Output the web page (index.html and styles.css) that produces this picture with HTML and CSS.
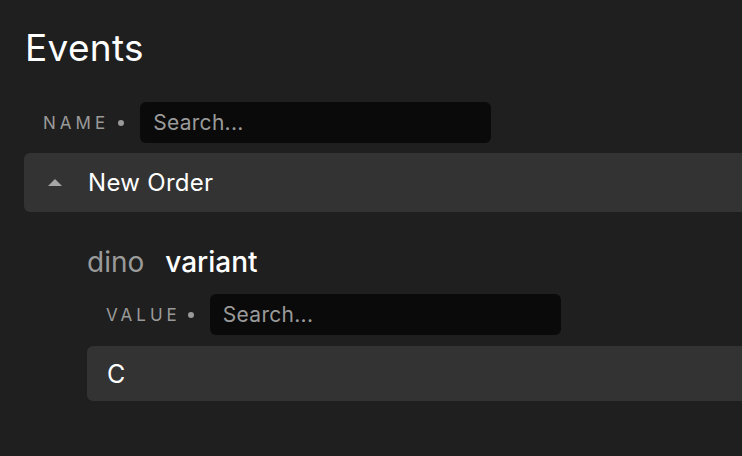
FILE: index.html
```html
<!DOCTYPE html>
<html>
<head>
<meta charset="utf-8">
<link rel="stylesheet" href="styles.css">
</head>
<body>
<main class="page">
  <h1 class="title">Events</h1>
  <div class="filter filter-name">
    <span class="filter-label">NAME</span>
    <span class="dot"></span>
    <input class="search" type="text" placeholder="Search...">
  </div>
  <div class="group">
    <div class="group-head">
      <svg class="caret" width="14" height="8" viewBox="0 0 14 8"><path d="M0 7 L7 0 L14 7 Z" fill="#a6a6a6"/></svg>
      <span class="group-name">New Order</span>
    </div>
    <div class="group-body">
      <div class="prop"><span class="prop-ns">dino</span><span class="prop-name">variant</span></div>
      <div class="filter filter-value">
        <span class="filter-label">VALUE</span>
        <span class="dot"></span>
        <input class="search" type="text" placeholder="Search...">
      </div>
      <div class="value-row">C</div>
    </div>
  </div>
</main>
</body>
</html>
```
FILE: styles.css
```css
html, body {
  margin: 0;
  padding: 0;
  background: #1f1f1f;
  overflow: hidden;
}
body {
  font-family: Inter, "Noto Sans", sans-serif;
  color: #fff;
}
.page {
  width: 1000px;
  padding: 24px 0 0 24px;
}
.title {
  margin: 0 0 0 1px;
  font-size: 37px;
  font-weight: 400;
  line-height: 48px;
  letter-spacing: 0.3px;
}
.filter {
  display: flex;
  align-items: center;
}
.filter-name {
  margin-top: 30px;
  padding-left: 19px;
}
.filter-name .dot {
  margin-left: 9px;
}
.filter-label {
  font-size: 17px;
  letter-spacing: 4px;
  color: #9a9a9a;
}
.dot {
  width: 6px;
  height: 6px;
  border-radius: 50%;
  background: #9a9a9a;
  margin: 0 16px 0 7px;
}
.search {
  width: 351px;
  height: 41px;
  box-sizing: border-box;
  border: none;
  outline: none;
  border-radius: 6px;
  background: #0a0a0a;
  padding: 0 13px;
  font-family: inherit;
  font-size: 21px;
  letter-spacing: 0.3px;
  color: #fff;
}
.search::placeholder {
  color: #9a9a9a;
}
.group {
  margin-top: 10px;
}
.group-head {
  display: flex;
  align-items: center;
  height: 59px;
  background: #333;
  border-radius: 6px 0 0 6px;
}
.caret {
  margin-left: 24px;
  margin-right: 26px;
}
.group-name {
  font-size: 24px;
  letter-spacing: 0.3px;
}
.group-body {
  padding-left: 63px;
}
.prop {
  margin-top: 33px;
  font-size: 28px;
  line-height: 34px;
}
.prop-ns {
  color: #9a9a9a;
  margin-right: 21px;
}
.prop-name {
  font-weight: 500;
}
.filter-value {
  margin-top: 15px;
  padding-left: 19px;
}
.value-row {
  margin-top: 11px;
  height: 55px;
  display: flex;
  align-items: center;
  padding-left: 20px;
  background: #333;
  border-radius: 6px 0 0 6px;
  font-size: 25px;
}
```
